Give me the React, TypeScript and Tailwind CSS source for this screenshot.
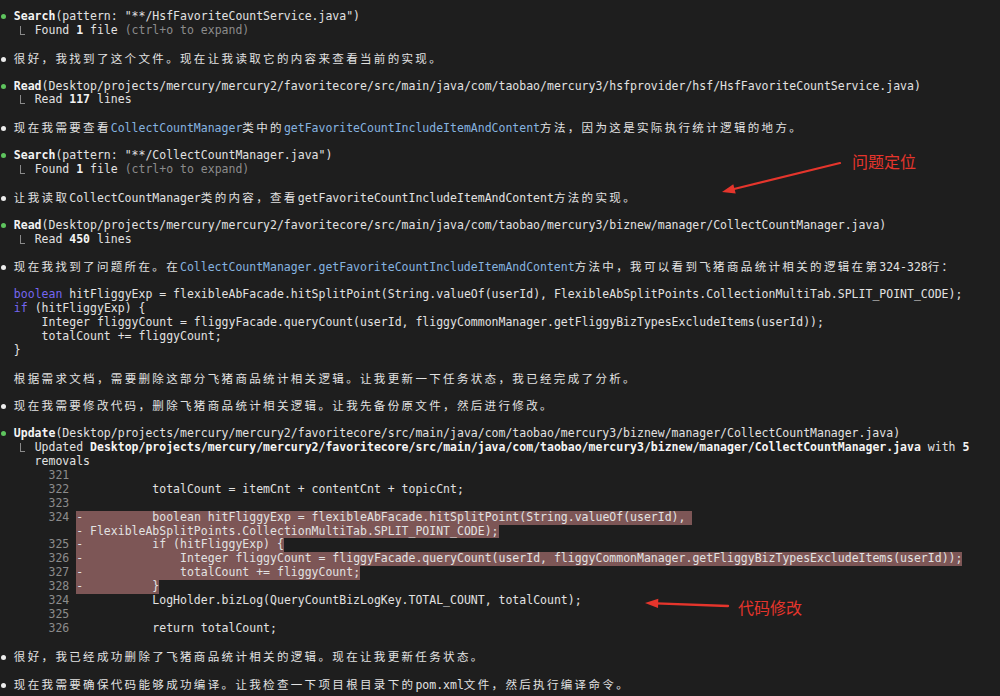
import React from "react";

const CJK_RE = /([\u3000-\u303f\u4e00-\u9fff\uff00-\uffef]+)/;

function Txt({ s }: { s: string }) {
  const parts = s.split(CJK_RE);
  return (
    <>
      {parts.map((p, i) =>
        i % 2 === 1 ? (
          <span key={i} className="font-['Noto_Sans_CJK_SC',sans-serif] tracking-[2.346px]">
            {p}
          </span>
        ) : (
          <React.Fragment key={i}>{p}</React.Fragment>
        )
      )}
    </>
  );
}

function Row({ children }: { children?: React.ReactNode }) {
  return <div className="h-[13.92px] whitespace-pre">{children}</div>;
}

function Dot({ green }: { green?: boolean }) {
  return (
    <span className="inline-block w-[13.846px]">
      <span
        className={
          green
            ? "inline-block w-[5px] h-[5px] rounded-full bg-[#5ec45e] ml-[1px] align-middle"
            : "inline-block w-[5px] h-[5px] rounded-full bg-[#ececec] ml-[1px] align-middle"
        }
      />
    </span>
  );
}

function Elbow() {
  return (
    <>
      {"  "}
      <span className="relative inline-block w-[13.846px] h-[13.92px] align-top">
        <span className="absolute left-[6px] top-[2px] w-[5px] h-[9px] border-l border-b border-[#8a8a8a]" />
      </span>
      {" "}
    </>
  );
}

const B = ({ children }: { children: React.ReactNode }) => (
  <span className="font-bold text-[#f4f4f4]">{children}</span>
);
const Blue = ({ children }: { children: React.ReactNode }) => (
  <span className="text-[#86b4e0]">{children}</span>
);
const Kw = ({ children }: { children: React.ReactNode }) => (
  <span className="text-[#7566f0]">{children}</span>
);
const Gray = ({ children }: { children: React.ReactNode }) => (
  <span className="text-[#8c8c8c]">{children}</span>
);
const Hl = ({ children }: { children: React.ReactNode }) => (
  <span className="inline-block h-[13.92px] align-top bg-[#7d5656]">{children}</span>
);

export default function App() {
  return (
    <div className="relative w-[1000px] h-[696px] overflow-hidden bg-[#1e1e1e] pt-[10px] font-['DejaVu_Sans_Mono',monospace] text-[11.5px] leading-[13.92px] text-[#e2e2e2]">
      <Row>
        <Dot green />
        <B>Search</B>(pattern: "**/HsfFavoriteCountService.java")
      </Row>
      <Row>
        <Elbow />
        Found <B>1</B> file <Gray>(ctrl+o to expand)</Gray>
      </Row>
      <Row />
      <Row>
        <Dot />
        <Txt s="很好，我找到了这个文件。现在让我读取它的内容来查看当前的实现。" />
      </Row>
      <Row />
      <Row>
        <Dot green />
        <B>Read</B>
        (Desktop/projects/mercury/mercury2/favoritecore/src/main/java/com/taobao/mercury3/hsfprovider/hsf/HsfFavoriteCountService.java)
      </Row>
      <Row>
        <Elbow />
        Read <B>117</B> lines
      </Row>
      <Row />
      <Row>
        <Dot />
        <Txt s="现在我需要查看" />
        <Blue>CollectCountManager</Blue>
        <Txt s="类中的" />
        <Blue>getFavoriteCountIncludeItemAndContent</Blue>
        <Txt s="方法，因为这是实际执行统计逻辑的地方。" />
      </Row>
      <Row />
      <Row>
        <Dot green />
        <B>Search</B>(pattern: "**/CollectCountManager.java")
      </Row>
      <Row>
        <Elbow />
        Found <B>1</B> file <Gray>(ctrl+o to expand)</Gray>
      </Row>
      <Row />
      <Row>
        <Dot />
        <Txt s="让我读取CollectCountManager类的内容，查看getFavoriteCountIncludeItemAndContent方法的实现。" />
      </Row>
      <Row />
      <Row>
        <Dot green />
        <B>Read</B>
        (Desktop/projects/mercury/mercury2/favoritecore/src/main/java/com/taobao/mercury3/biznew/manager/CollectCountManager.java)
      </Row>
      <Row>
        <Elbow />
        Read <B>450</B> lines
      </Row>
      <Row />
      <Row>
        <Dot />
        <Txt s="现在我找到了问题所在。在" />
        <Blue>CollectCountManager.getFavoriteCountIncludeItemAndContent</Blue>
        <Txt s="方法中，我可以看到飞猪商品统计相关的逻辑在第324-328行：" />
      </Row>
      <Row />
      <Row>
        {"  "}
        <Kw>boolean</Kw>
        {" hitFliggyExp = flexibleAbFacade.hitSplitPoint(String.valueOf(userId), FlexibleAbSplitPoints.CollectionMultiTab.SPLIT_POINT_CODE);"}
      </Row>
      <Row>
        {"  "}
        <Kw>if</Kw>
        {" (hitFliggyExp) {"}
      </Row>
      <Row>{"      Integer fliggyCount = fliggyFacade.queryCount(userId, fliggyCommonManager.getFliggyBizTypesExcludeItems(userId));"}</Row>
      <Row>{"      totalCount += fliggyCount;"}</Row>
      <Row>{"  }"}</Row>
      <Row />
      <Row>
        {"  "}
        <Txt s="根据需求文档，需要删除这部分飞猪商品统计相关逻辑。让我更新一下任务状态，我已经完成了分析。" />
      </Row>
      <Row />
      <Row>
        <Dot />
        <Txt s="现在我需要修改代码，删除飞猪商品统计相关逻辑。让我先备份原文件，然后进行修改。" />
      </Row>
      <Row />
      <Row>
        <Dot green />
        <B>Update</B>
        (Desktop/projects/mercury/mercury2/favoritecore/src/main/java/com/taobao/mercury3/biznew/manager/CollectCountManager.java)
      </Row>
      <Row>
        <Elbow />
        {"Updated "}
        <B>Desktop/projects/mercury/mercury2/favoritecore/src/main/java/com/taobao/mercury3/biznew/manager/CollectCountManager.java</B>
        {" with "}
        <B>5</B>
      </Row>
      <Row>{"     removals"}</Row>
      <Row>
        <Gray>{"       321"}</Gray>
      </Row>
      <Row>
        <Gray>{"       322"}</Gray>
        {"            totalCount = itemCnt + contentCnt + topicCnt;"}
      </Row>
      <Row>
        <Gray>{"       323"}</Gray>
      </Row>
      <Row>
        <Gray>{"       324"}</Gray>
        {" "}
        <Hl>{"-          boolean hitFliggyExp = flexibleAbFacade.hitSplitPoint(String.valueOf(userId), "}</Hl>
      </Row>
      <Row>
        {"           "}
        <Hl>{"- FlexibleAbSplitPoints.CollectionMultiTab.SPLIT_POINT_CODE);"}</Hl>
      </Row>
      <Row>
        <Gray>{"       325"}</Gray>
        {" "}
        <Hl>{"-          if (hitFliggyExp) {"}</Hl>
      </Row>
      <Row>
        <Gray>{"       326"}</Gray>
        {" "}
        <Hl>{"-              Integer fliggyCount = fliggyFacade.queryCount(userId, fliggyCommonManager.getFliggyBizTypesExcludeItems(userId));"}</Hl>
      </Row>
      <Row>
        <Gray>{"       327"}</Gray>
        {" "}
        <Hl>{"-              totalCount += fliggyCount;"}</Hl>
      </Row>
      <Row>
        <Gray>{"       328"}</Gray>
        {" "}
        <Hl>{"-          }"}</Hl>
      </Row>
      <Row>
        <Gray>{"       324"}</Gray>
        {"            LogHolder.bizLog(QueryCountBizLogKey.TOTAL_COUNT, totalCount);"}
      </Row>
      <Row>
        <Gray>{"       325"}</Gray>
      </Row>
      <Row>
        <Gray>{"       326"}</Gray>
        {"            return totalCount;"}
      </Row>
      <Row />
      <Row>
        <Dot />
        <Txt s="很好，我已经成功删除了飞猪商品统计相关的逻辑。现在让我更新任务状态。" />
      </Row>
      <Row />
      <Row>
        <Dot />
        <Txt s="现在我需要确保代码能够成功编译。让我检查一下项目根目录下的pom.xml文件，然后执行编译命令。" />
      </Row>

      {/* annotations overlay */}
      <svg
        className="absolute left-0 top-0 pointer-events-none"
        width="1000"
        height="696"
        viewBox="0 0 1000 696"
      >
        <line x1="840" y1="163" x2="733" y2="189.3" stroke="#e5352c" strokeWidth="2.2" strokeLinecap="round" />
        <polygon points="722,192 735.7,193.6 733.3,184.3" fill="#e5352c" />
        <line x1="728" y1="606" x2="656" y2="603.4" stroke="#e5352c" strokeWidth="2.4" strokeLinecap="round" />
        <polygon points="645,603 658,608 658.3,598.8" fill="#e5352c" />
      </svg>
      <div className="absolute left-[852px] top-[153px] font-['Noto_Sans_CJK_SC',sans-serif] text-[16px] leading-none text-[#e5352c]">
        问题定位
      </div>
      <div className="absolute left-[738px] top-[599px] font-['Noto_Sans_CJK_SC',sans-serif] text-[16px] leading-none text-[#e5352c]">
        代码修改
      </div>
    </div>
  );
}
